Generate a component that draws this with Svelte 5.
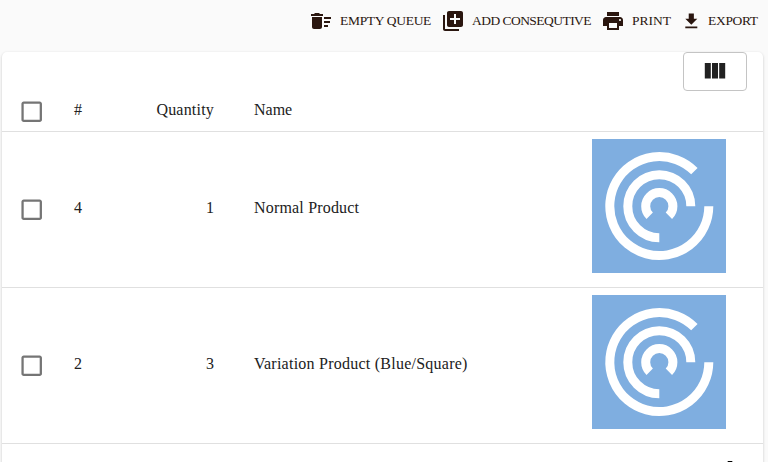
<script>
  const actions = [
    {
      name: "empty",
      label: "EMPTY QUEUE",
      icon:
        "M15 16h4v2h-4zm0-8h7v2h-7zm0 4h6v2h-6zM3 18c0 1.1.9 2 2 2h6c1.1 0 2-.9 2-2V8H3v10zM14 5h-3l-1-1H6L5 5H2v2h12z"
    },
    {
      name: "add",
      label: "ADD CONSEQUTIVE",
      icon:
        "M4 6H2v14c0 1.1.9 2 2 2h14v-2H4V6zm16-4H8c-1.1 0-2 .9-2 2v12c0 1.1.9 2 2 2h12c1.1 0 2-.9 2-2V4c0-1.1-.9-2-2-2zm-1 9h-4v4h-2v-4H9V9h4V5h2v4h4v2z"
    },
    {
      name: "print",
      label: "PRINT",
      icon:
        "M19 8H5c-1.66 0-3 1.34-3 3v6h4v4h12v-4h4v-6c0-1.66-1.34-3-3-3zm-3 11H8v-5h8v5zm3-7c-.55 0-1-.45-1-1s.45-1 1-1 1 .45 1 1-.45 1-1 1zm-1-9H6v4h12V3z"
    },
    {
      name: "export",
      label: "EXPORT",
      icon: "M19 9h-4V3H9v6H5l7 7 7-7zM5 18v2h14v-2H5z"
    }
  ];

  const rows = [
    { id: 4, quantity: 1, name: "Normal Product", style: "normal" },
    { id: 2, quantity: 3, name: "Variation Product (Blue/Square)", style: "variation" }
  ];
</script>

{#snippet checkbox()}
  <svg class="checkbox" viewBox="0 0 24 24">
    <path
      d="M19 5v14H5V5h14m0-2H5c-1.1 0-2 .9-2 2v14c0 1.1.9 2 2 2h14c1.1 0 2-.9 2-2V5c0-1.1-.9-2-2-2z" />
  </svg>
{/snippet}

<div class="page">
  <div class="actions">
    {#each actions as action}
      <div class="action {action.name}">
        <svg viewBox="0 0 24 24"><path d={action.icon} /></svg>
        <span>{action.label}</span>
      </div>
    {/each}
  </div>

  <div class="card">
    <div class="toolbar">
      <button class="columns" aria-label="Show columns">
        <svg viewBox="0 0 24 24">
          <path d="M10 18h5V5h-5v13zm-6 0h5V5H4v13zM16 5v13h5V5h-5z" />
        </svg>
      </button>
    </div>

    <div class="row head">
      {@render checkbox()}
      <span>#</span>
      <span class="quantity">Quantity</span>
      <span class="name header">Name</span>
    </div>

    {#each rows as row}
      <div class="row item">
        {@render checkbox()}
        <span>{row.id}</span>
        <span class="quantity">{row.quantity}</span>
        <span class="name {row.style}">{row.name}</span>
        <svg class="picture" viewBox="0 0 134 134">
          <rect width="134" height="134" />
          <path d="M102.4 32.2A49.5 49.5 0 1 0 116.8 67.2" />
          <path d="M98.8 67.2A31.5 31.5 0 1 0 67.3 98.7" />
          <path d="M57.7 76.8A13.6 13.6 0 1 1 76.9 76.8" />
        </svg>
      </div>
    {/each}

    <div class="footer">
      <svg viewBox="0 0 24 24"><path d="M7 14l3-5h4l3 5z" /></svg>
    </div>
  </div>
</div>

<style>
  :global(body) {
    background: #fafafa;
  }

  .page {
    height: 462px;
    overflow: hidden;
    font-family: "Liberation Serif", serif;
    font-size: 16px;
    color: #212121;
  }

  .actions {
    display: flex;
    height: 52px;
    padding-left: 309px;
    color: #2a160f;
  }

  .action {
    display: flex;
    flex-shrink: 0;
    height: 42px;
    align-items: center;
    font-size: 13.5px;
    line-height: 20px;
    white-space: nowrap;
  }

  .action svg {
    width: 24px;
    height: 24px;
    margin-right: 7px;
    fill: currentColor;
  }

  .empty {
    width: 132px;
    letter-spacing: -0.3px;
  }

  .add {
    width: 160px;
    letter-spacing: -0.54px;
  }

  .print {
    width: 80px;
  }

  .export {
    letter-spacing: -0.35px;
  }

  .export svg {
    width: 20.6px;
    height: 20.6px;
    margin-right: 6.5px;
  }

  .card {
    box-sizing: border-box;
    width: 761px;
    height: 440px;
    margin-left: 2px;
    border-radius: 5px;
    background: #fff;
    box-shadow: 0 1px 3px rgba(0, 0, 0, 0.2);
  }

  .toolbar {
    display: flex;
    justify-content: flex-end;
    height: 39px;
    padding-right: 16px;
  }

  .columns {
    display: flex;
    align-items: center;
    justify-content: center;
    width: 64px;
    height: 39px;
    padding: 0 1px 0 0;
    border: 1px solid #c4c4c4;
    border-radius: 4px;
    background: #fff;
  }

  .columns svg {
    width: 28.8px;
    height: 28.8px;
    fill: #212121;
  }

  .row {
    box-sizing: border-box;
    display: grid;
    grid-template-columns: 56px 69px 71px 338px 134px;
    align-items: center;
    padding-left: 16px;
    border-bottom: 1px solid #e0e0e0;
    line-height: 20px;
  }

  .row span {
    padding-bottom: 3px;
  }

  .head {
    height: 41px;
  }

  .item {
    height: 156px;
  }

  .checkbox {
    width: 27.4px;
    height: 27.4px;
    margin-top: 1px;
    fill: #757575;
  }

  .item .checkbox {
    margin-top: 0;
  }

  .quantity {
    text-align: right;
  }

  .head .quantity {
    letter-spacing: 0.2px;
  }

  .row .name {
    padding-left: 40px;
  }

  .normal {
    letter-spacing: 0.18px;
  }

  .variation {
    letter-spacing: 0.24px;
  }

  .picture {
    width: 134px;
    height: 134px;
    margin: 0 0 7px 40px;
  }

  .picture rect {
    fill: #7faee0;
  }

  .picture path {
    fill: none;
    stroke: #fff;
    stroke-width: 9;
  }

  .footer {
    display: flex;
    justify-content: flex-end;
    padding: 8px 21px 0 0;
  }

  .footer svg {
    width: 24px;
    height: 24px;
  }
</style>
